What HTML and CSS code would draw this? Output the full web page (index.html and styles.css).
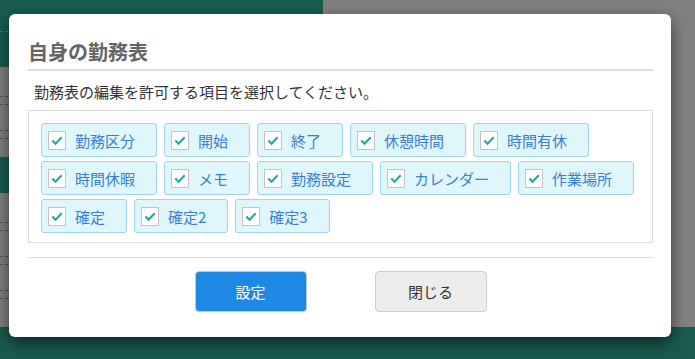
FILE: index.html
```html
<!DOCTYPE html>
<html lang="ja">
<head>
    <meta charset="UTF-8">
    <meta name="viewport" content="width=device-width, initial-scale=1.0">
    <title>自身の勤務表</title>
    <link rel="stylesheet" href="styles.css">
</head>
<body>
    <div class="page">
        <div class="page-body">
            <aside class="side">
                <div class="side-head"></div>
                <div class="side-list">
                    <div class="side-item"></div>
                    <div class="side-item"></div>
                </div>
                <div class="side-band"></div>
                <div class="side-list side-list-long">
                    <div class="side-item"></div>
                    <div class="side-item"></div>
                    <div class="side-item side-item-last"></div>
                </div>
            </aside>
            <main class="content"></main>
        </div>
        <footer class="page-foot"></footer>
    </div>

    <div class="modal">
        <h2 class="modal-title">自身の勤務表</h2>
        <p class="modal-lead">勤務表の編集を許可する項目を選択してください。</p>
        <div class="check-box">
            <label class="check-item"><span class="check-mark"><svg viewBox="0 0 17 17"><polyline points="3.5,8.5 7,12 13.5,5"/></svg></span>勤務区分</label>
            <label class="check-item"><span class="check-mark"><svg viewBox="0 0 17 17"><polyline points="3.5,8.5 7,12 13.5,5"/></svg></span>開始</label>
            <label class="check-item"><span class="check-mark"><svg viewBox="0 0 17 17"><polyline points="3.5,8.5 7,12 13.5,5"/></svg></span>終了</label>
            <label class="check-item"><span class="check-mark"><svg viewBox="0 0 17 17"><polyline points="3.5,8.5 7,12 13.5,5"/></svg></span>休憩時間</label>
            <label class="check-item"><span class="check-mark"><svg viewBox="0 0 17 17"><polyline points="3.5,8.5 7,12 13.5,5"/></svg></span>時間有休</label>
            <label class="check-item"><span class="check-mark"><svg viewBox="0 0 17 17"><polyline points="3.5,8.5 7,12 13.5,5"/></svg></span>時間休暇</label>
            <label class="check-item"><span class="check-mark"><svg viewBox="0 0 17 17"><polyline points="3.5,8.5 7,12 13.5,5"/></svg></span>メモ</label>
            <label class="check-item"><span class="check-mark"><svg viewBox="0 0 17 17"><polyline points="3.5,8.5 7,12 13.5,5"/></svg></span>勤務設定</label>
            <label class="check-item"><span class="check-mark"><svg viewBox="0 0 17 17"><polyline points="3.5,8.5 7,12 13.5,5"/></svg></span>カレンダー</label>
            <label class="check-item"><span class="check-mark"><svg viewBox="0 0 17 17"><polyline points="3.5,8.5 7,12 13.5,5"/></svg></span>作業場所</label>
            <label class="check-item"><span class="check-mark"><svg viewBox="0 0 17 17"><polyline points="3.5,8.5 7,12 13.5,5"/></svg></span>確定</label>
            <label class="check-item"><span class="check-mark"><svg viewBox="0 0 17 17"><polyline points="3.5,8.5 7,12 13.5,5"/></svg></span>確定2</label>
            <label class="check-item"><span class="check-mark"><svg viewBox="0 0 17 17"><polyline points="3.5,8.5 7,12 13.5,5"/></svg></span>確定3</label>
        </div>
        <div class="modal-foot">
            <button type="button" class="btn btn-primary">設定</button>
            <button type="button" class="btn btn-default">閉じる</button>
        </div>
    </div>
</body>
</html>
```

FILE: styles.css
```css
/* General Reset */
* {
    margin: 0;
    padding: 0;
    box-sizing: border-box;
}

body {
    font-family: "Noto Sans CJK JP", "Noto Sans", sans-serif;
    background-color: #808080;
    color: #333;
    width: 695px;
    height: 359px;
    overflow: hidden;
    position: relative;
}

/* Page behind the overlay */
.page {
    display: flex;
    flex-direction: column;
    height: 359px;
}

.page-body {
    display: flex;
    height: 327px;
}

.side {
    width: 323px;
    display: flex;
    flex-direction: column;
}

.side-head {
    height: 67px;
    background-color: #185b4f;
    padding-top: 31px;
}

.side-head::before {
    content: "";
    display: block;
    border-top: 1px dashed #4e7770;
}

.side-list {
    height: 90px;
    background-color: #808080;
    padding-top: 29px;
}

.side-list-long {
    flex: 1;
}

.side-item {
    height: 9px;
    border-top: 1px dashed #555;
    border-bottom: 1px dashed #555;
    margin-bottom: 25px;
}

.side-item-last {
    margin-top: 18px;
}

.side-band {
    height: 36px;
    background-color: #185b4f;
}

.content {
    flex: 1;
    background-color: #808080;
}

.page-foot {
    flex: 1;
    background-color: #185b4f;
}

/* Modal */
.modal {
    position: absolute;
    top: 14px;
    left: 9px;
    width: 662px;
    height: 323px;
    background: #ffffff;
    border-radius: 6px;
    box-shadow: 0 6px 16px rgba(0, 0, 0, 0.55);
    padding: 0 18px 0 19px;
}

.modal-title {
    padding-top: 24px;
    padding-bottom: 3px;
    font-size: 20px;
    line-height: 28px;
    font-weight: bold;
    color: #666;
    border-bottom: 2px solid #ddd;
}

.modal-lead {
    margin-top: 10px;
    padding-left: 6px;
    font-size: 15px;
    line-height: 22px;
    color: #333;
}

.check-box {
    margin-top: 7px;
    border: 1px solid #ddd;
    padding: 12px 12px 9px;
    display: flex;
    flex-wrap: wrap;
    gap: 4px 7px;
}

.check-item {
    display: inline-flex;
    align-items: center;
    height: 34px;
    padding: 0 21px 0 6px;
    background-color: #dff6fa;
    border: 1px solid #9fd2ef;
    border-radius: 3px;
    font-size: 15px;
    color: #3b7ed3;
    cursor: pointer;
}

.check-mark {
    flex: none;
    width: 18px;
    height: 19px;
    margin-right: 9px;
    background-color: #fff;
    border: 1px solid #c4c4c4;
    display: flex;
}

.check-mark svg {
    width: 16px;
    height: 17px;
    fill: none;
    stroke: #26a896;
    stroke-width: 2.2;
}

.modal-foot {
    margin-top: 14px;
    border-top: 1px solid #ddd;
    padding-top: 13px;
    display: flex;
    justify-content: center;
    gap: 68px;
}

.btn {
    width: 112px;
    height: 41px;
    border-radius: 4px;
    font-family: inherit;
    font-size: 15px;
    cursor: pointer;
}

.btn-primary {
    background-color: #1e88e5;
    border: 1px solid #b9cbe0;
    color: #fff;
}

.btn-default {
    background-color: #ededed;
    border: 1px solid #ccc;
    color: #333;
}
```
